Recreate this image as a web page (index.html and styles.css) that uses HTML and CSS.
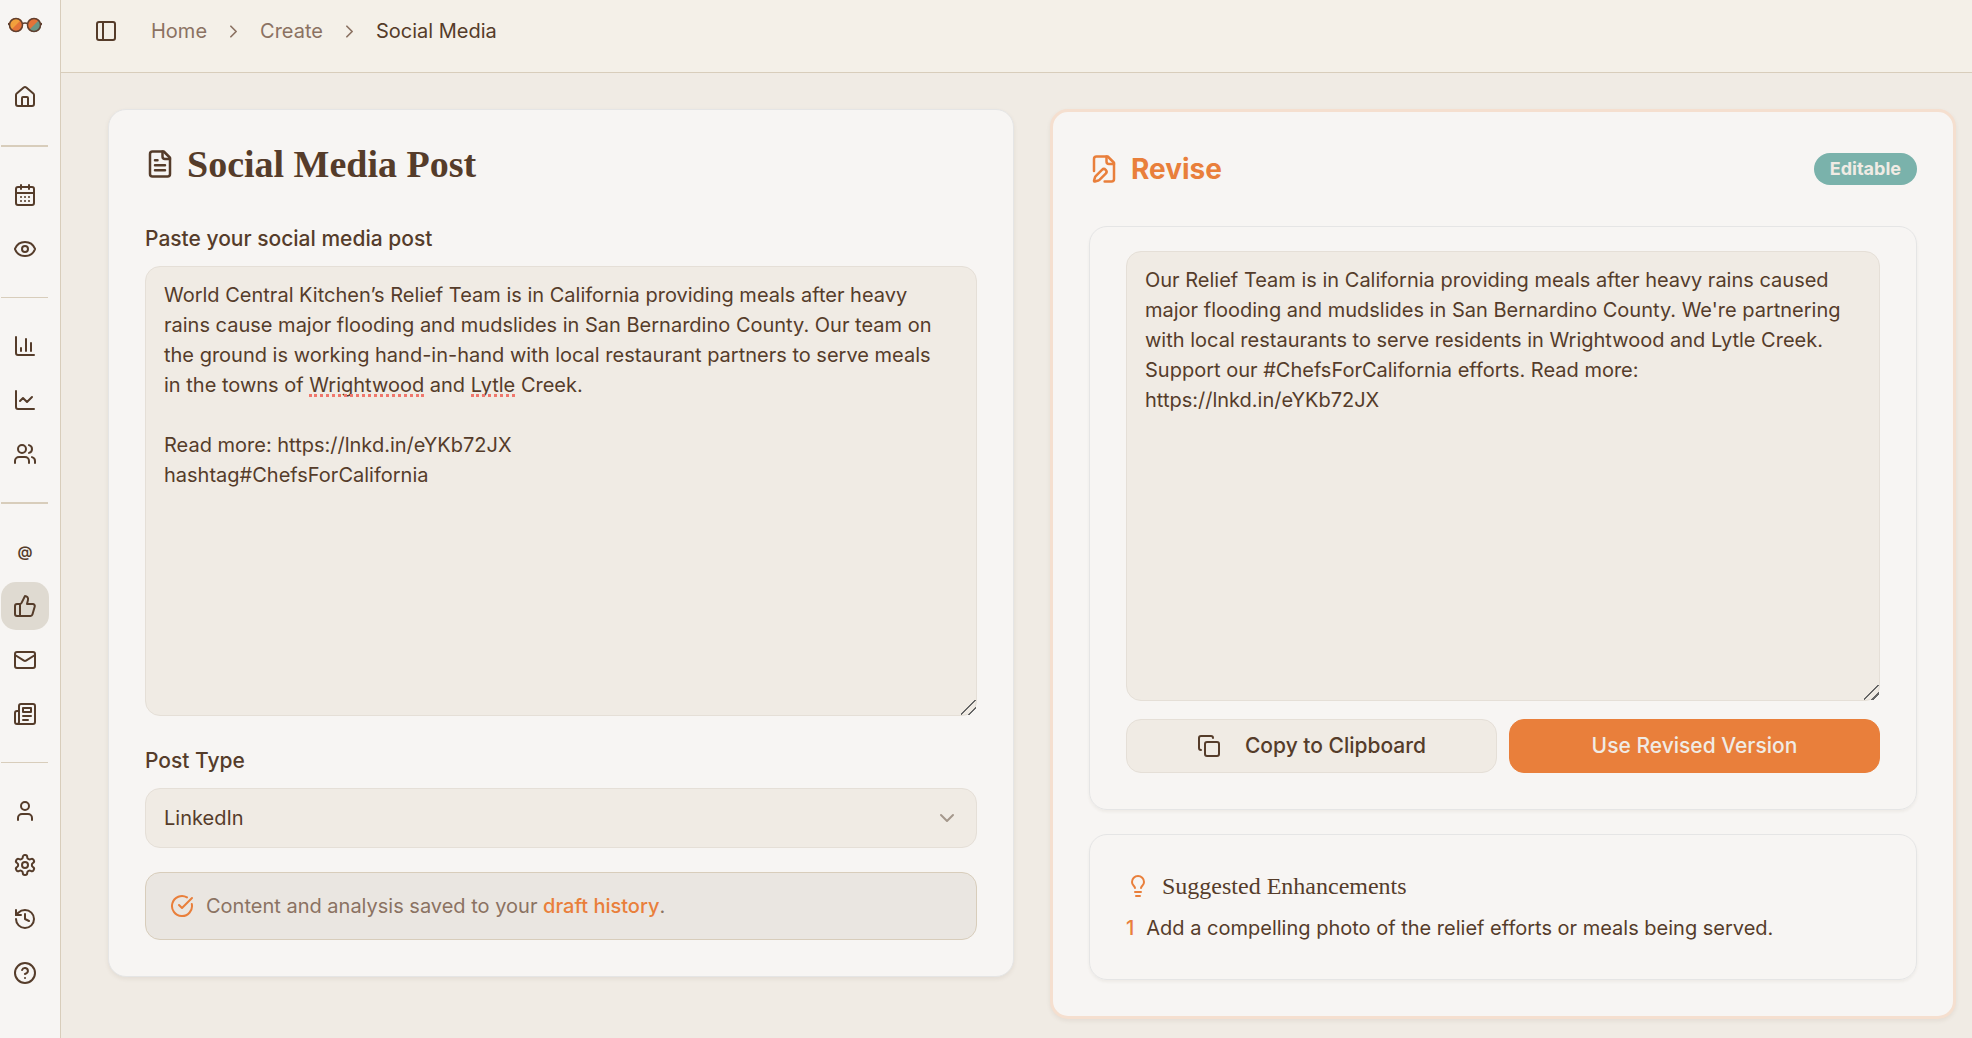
FILE: index.html
```html
<!DOCTYPE html>
<html lang="en">
<head>
  <meta charset="UTF-8">
  <meta name="viewport" content="width=device-width, initial-scale=1">
  <title>Social Media</title>
  <link rel="stylesheet" href="styles.css">
</head>
<body>
  <aside class="sidebar">
    <a class="logo" href="#" aria-label="Dashboard">
      <svg width="34" height="16" viewBox="0 0 34 16">
        <path d="M14 7q3-2 6 0M1 6L0 8M33 6l1 2" fill="none" stroke="#5f3f30" stroke-width="1.5"/>
        <circle cx="8" cy="8" r="7" fill="#e57338"/>
        <path d="M3 13A7 7 0 0 1 13 3Z" fill="#f2a03c"/>
        <circle cx="26" cy="8" r="7" fill="#e57338"/>
        <path d="M21 13A7 7 0 0 0 31 3Z" fill="#6b9685"/>
        <circle cx="8" cy="8" r="6.500" fill="none" stroke="#5f3f30" stroke-width="1.5"/>
        <circle cx="26" cy="8" r="6.500" fill="none" stroke="#5f3f30" stroke-width="1.5"/>
      </svg>
    </a>

    <nav>
      <a href="#" aria-label="Home"><svg class="icon" viewBox="0 0 24 24"><path d="M15 21v-8a1 1 0 0 0-1-1h-4a1 1 0 0 0-1 1v8"/><path d="M3 10a2 2 0 0 1 .709-1.528l7-5.999a2 2 0 0 1 2.582 0l7 5.999A2 2 0 0 1 21 10v9a2 2 0 0 1-2 2H5a2 2 0 0 1-2-2z"/></svg></a>
      <hr>
      <a href="#" aria-label="Calendar"><svg class="icon" viewBox="0 0 24 24"><path d="M8 2v4M16 2v4"/><rect width="18" height="18" x="3" y="4" rx="2"/><path d="M3 10h18M8 14h.01M12 14h.01M16 14h.01M8 18h.01M12 18h.01M16 18h.01"/></svg></a>
      <a href="#" aria-label="Preview"><svg class="icon" viewBox="0 0 24 24"><path d="M2.062 12.348a1 1 0 0 1 0-.696 10.75 10.75 0 0 1 19.876 0 1 1 0 0 1 0 .696 10.75 10.75 0 0 1-19.876 0"/><circle cx="12" cy="12" r="3"/></svg></a>
      <hr>
      <a href="#" aria-label="Reports"><svg class="icon" viewBox="0 0 24 24"><path d="M3 3v16a2 2 0 0 0 2 2h16M18 17V9M13 17V5M8 17v-3"/></svg></a>
      <a href="#" aria-label="Trends"><svg class="icon" viewBox="0 0 24 24"><path d="M3 3v16a2 2 0 0 0 2 2h16"/><path d="m7 13 3-3 4 4 5-5"/></svg></a>
      <a href="#" aria-label="Audience"><svg class="icon" viewBox="0 0 24 24"><path d="M16 21v-2a4 4 0 0 0-4-4H6a4 4 0 0 0-4 4v2"/><circle cx="9" cy="7" r="4"/><path d="M22 21v-2a4 4 0 0 0-3-3.87M16 3.13a4 4 0 0 1 0 7.75"/></svg></a>
      <hr>
      <a class="at" href="#" aria-label="Mentions">@</a>
      <a class="active" href="#" aria-label="Social Media"><svg class="icon" viewBox="0 0 24 24"><path d="M7 10v12"/><path d="M15 5.88 14 10h5.83a2 2 0 0 1 1.92 2.56l-2.33 8A2 2 0 0 1 17.5 22H4a2 2 0 0 1-2-2v-8a2 2 0 0 1 2-2h2.76a2 2 0 0 0 1.79-1.11L12 2a3.13 3.13 0 0 1 3 3.88Z"/></svg></a>
      <a href="#" aria-label="Email"><svg class="icon" viewBox="0 0 24 24"><rect width="20" height="16" x="2" y="4" rx="2"/><path d="m22 7-8.97 5.7a1.94 1.94 0 0 1-2.06 0L2 7"/></svg></a>
      <a href="#" aria-label="Newsletter"><svg class="icon" viewBox="0 0 24 24"><path d="M4 22h16a2 2 0 0 0 2-2V4a2 2 0 0 0-2-2H8a2 2 0 0 0-2 2v16a2 2 0 0 1-2 2Zm0 0a2 2 0 0 1-2-2v-9c0-1.1.9-2 2-2h2M18 14h-8M15 18h-5M10 6h8v4h-8V6Z"/></svg></a>
      <hr>
      <a href="#" aria-label="Profile"><svg class="icon" viewBox="0 0 24 24"><path d="M19 21v-2a4 4 0 0 0-4-4H9a4 4 0 0 0-4 4v2"/><circle cx="12" cy="7" r="4"/></svg></a>
      <a href="#" aria-label="Settings"><svg class="icon" viewBox="0 0 24 24"><path d="M12.22 2h-.44a2 2 0 0 0-2 2v.18a2 2 0 0 1-1 1.73l-.43.25a2 2 0 0 1-2 0l-.15-.08a2 2 0 0 0-2.73.73l-.22.38a2 2 0 0 0 .73 2.73l.15.1a2 2 0 0 1 1 1.72v.51a2 2 0 0 1-1 1.74l-.15.09a2 2 0 0 0-.73 2.73l.22.38a2 2 0 0 0 2.73.73l.15-.08a2 2 0 0 1 2 0l.43.25a2 2 0 0 1 1 1.73V20a2 2 0 0 0 2 2h.44a2 2 0 0 0 2-2v-.18a2 2 0 0 1 1-1.73l.43-.25a2 2 0 0 1 2 0l.15.08a2 2 0 0 0 2.73-.73l.22-.39a2 2 0 0 0-.73-2.73l-.15-.08a2 2 0 0 1-1-1.74v-.5a2 2 0 0 1 1-1.74l.15-.09a2 2 0 0 0 .73-2.73l-.22-.38a2 2 0 0 0-2.73-.73l-.15.08a2 2 0 0 1-2 0l-.43-.25a2 2 0 0 1-1-1.73V4a2 2 0 0 0-2-2z"/><circle cx="12" cy="12" r="3"/></svg></a>
      <a href="#" aria-label="History"><svg class="icon" viewBox="0 0 24 24"><path d="M3 12a9 9 0 1 0 9-9 9.75 9.75 0 0 0-6.74 2.74L3 8"/><path d="M3 3v5h5M12 7v5l4 2"/></svg></a>
      <a href="#" aria-label="Help"><svg class="icon" viewBox="0 0 24 24"><circle cx="12" cy="12" r="10"/><path d="M9.09 9a3 3 0 0 1 5.83 1c0 2-3 3-3 3M12 17h.01"/></svg></a>
    </nav>
  </aside>

  <div class="page">
    <header class="topbar">
      <button class="toggle" aria-label="Toggle sidebar"><svg class="icon" viewBox="0 0 24 24"><rect width="18" height="18" x="3" y="3" rx="2"/><path d="M9 3v18"/></svg></button>
      <nav class="breadcrumb">
        <a href="#">Home</a>
        <svg class="icon chevron" viewBox="0 0 24 24"><path d="m9 18 6-6-6-6"/></svg>
        <a href="#">Create</a>
        <svg class="icon chevron" viewBox="0 0 24 24"><path d="m9 18 6-6-6-6"/></svg>
        <span class="current">Social Media</span>
      </nav>
    </header>

    <main>
      <section class="card">
        <h1><svg class="icon icon-lg" viewBox="0 0 24 24"><path d="M15 2H6a2 2 0 0 0-2 2v16a2 2 0 0 0 2 2h12a2 2 0 0 0 2-2V7Z"/><path d="M14 2v4a2 2 0 0 0 2 2h4M10 9H8M16 13H8M16 17H8"/></svg>Social Media Post</h1>

        <label for="post">Paste your social media post</label>
        <div class="spell-field">
          <textarea id="post" spellcheck="false">World Central Kitchen’s Relief Team is in California providing meals after heavy
rains cause major flooding and mudslides in San Bernardino County. Our team on
the ground is working hand-in-hand with local restaurant partners to serve meals
in the towns of Wrightwood and Lytle Creek.

Read more: https://lnkd.in/eYKb72JX
hashtag#ChefsForCalifornia</textarea>
          <div class="spell-marks" id="post-marks" aria-hidden="true"></div>
        </div>

        <label for="post-type">Post Type</label>
        <div class="select-wrap">
          <select id="post-type">
            <option>LinkedIn</option>
            <option>Facebook</option>
            <option>Instagram</option>
          </select>
          <svg class="icon" viewBox="0 0 24 24"><path d="m6 9 6 6 6-6"/></svg>
        </div>

        <div class="notice">
          <svg class="icon" viewBox="0 0 24 24"><path d="M21.801 10A10 10 0 1 1 17 3.335"/><path d="m9 11 3 3L22 4"/></svg>
          <p>Content and analysis saved to your <a href="#">draft history</a>.</p>
        </div>
      </section>

      <section class="card revise">
        <div class="revise-head">
          <h2><svg class="icon icon-lg" viewBox="0 0 24 24"><path d="M12.5 22H18a2 2 0 0 0 2-2V7l-5-5H6a2 2 0 0 0-2 2v9.5"/><path d="M14 2v4a2 2 0 0 0 2 2h4"/><path d="M13.378 15.626a1 1 0 1 0-3.004-3.004l-5.01 5.012a2 2 0 0 0-.506.854l-.837 2.87a.5.5 0 0 0 .62.62l2.87-.837a2 2 0 0 0 .854-.506z"/></svg>Revise</h2>
          <span class="badge">Editable</span>
        </div>

        <div class="panel">
          <textarea aria-label="Revised post" spellcheck="false">Our Relief Team is in California providing meals after heavy rains caused
major flooding and mudslides in San Bernardino County. We're partnering
with local restaurants to serve residents in Wrightwood and Lytle Creek.
Support our #ChefsForCalifornia efforts. Read more:
https://lnkd.in/eYKb72JX</textarea>
          <div class="actions">
            <button class="btn"><svg class="icon" viewBox="0 0 24 24"><rect width="14" height="14" x="8" y="8" rx="2"/><path d="M4 16c-1.1 0-2-.9-2-2V4c0-1.100.9-2 2-2h10c1.100 0 2 .9 2 2"/></svg>Copy to Clipboard</button>
            <button class="btn primary">Use Revised Version</button>
          </div>
        </div>

        <div class="panel suggestions">
          <h3><svg class="icon" viewBox="0 0 24 24"><path d="M15 14c.2-1 .7-1.700 1.500-2.500 1-.9 1.500-2.200 1.500-3.500A6 6 0 0 0 6 8c0 1 .2 2.200 1.500 3.500.7.7 1.300 1.500 1.500 2.500M9 18h6M10 22h4"/></svg>Suggested Enhancements</h3>
          <ol>
            <li>Add a compelling photo of the relief efforts or meals being served.</li>
          </ol>
        </div>
      </section>
    </main>
  </div>

  <script>
    const unknownWords = /\b(Wrightwood|Lytle)\b/g;
    const post = document.getElementById("post");
    const marks = document.getElementById("post-marks");

    // Lay the text out once to find the unknown words, then keep only their underlines
    function markSpelling() {
      marks.textContent = post.value;
      const node = marks.firstChild;
      const box = marks.getBoundingClientRect();
      const lines = [];

      for (const match of post.value.matchAll(unknownWords)) {
        const range = document.createRange();
        range.setStart(node, match.index);
        range.setEnd(node, match.index + match[0].length);
        const rect = range.getBoundingClientRect();
        const line = document.createElement("span");
        line.style.left = `${rect.left - box.left}px`;
        line.style.top = `${rect.bottom - box.top - post.scrollTop}px`;
        line.style.width = `${rect.width}px`;
        lines.push(line);
      }

      marks.replaceChildren(...lines);
    }

    post.addEventListener("input", markSpelling);
    post.addEventListener("scroll", markSpelling);
    window.addEventListener("resize", markSpelling);
    markSpelling();
  </script>
</body>
</html>
```

FILE: styles.css
```css
* { box-sizing: border-box; margin: 0; padding: 0; }

body {
  display: flex;
  min-height: 100vh;
  background: #f0ebe4;
  color: #553c2a;
  font: 20px/30px Inter, "Liberation Sans", sans-serif;
}

a { color: inherit; text-decoration: none; }
button, textarea, select { font: inherit; color: inherit; }
button { cursor: pointer; }

.icon {
  width: 24px;
  height: 24px;
  flex: none;
  fill: none;
  stroke: currentColor;
  stroke-width: 2;
  stroke-linecap: round;
  stroke-linejoin: round;
}
.icon-lg { width: 30px; height: 30px; }

/* Sidebar */
.sidebar {
  width: 61px;
  flex: none;
  background: #f7f5f3;
  border-right: 1px solid #d8cdbb;
}
.logo { display: flex; height: 73px; padding: 17px 8px; }
.sidebar nav { display: flex; flex-direction: column; gap: 6px; padding-left: 1px; }
.sidebar nav a {
  display: flex;
  align-items: center;
  justify-content: center;
  width: 48px;
  height: 48px;
  border-radius: 15px;
}
.sidebar nav a.active { background: #dfdad1; }
.sidebar .at { font-size: 15px; font-weight: 600; }
.sidebar hr { width: 47px; margin: 18px 0; border: 0; border-top: 1px solid #d8cdbb; }
.sidebar hr:nth-of-type(odd) { border-top-width: 2px; }

/* Top bar */
.page { flex: 1; min-width: 0; }
.topbar {
  display: flex;
  align-items: center;
  gap: 33px;
  height: 73px;
  padding: 0 33px 10px;
  background: #f4f0e8;
  border-bottom: 1px solid #d8cdbb;
}
.toggle { display: flex; border: 0; background: none; }
.breadcrumb { display: flex; align-items: center; gap: 16px; color: #8b7262; }
.breadcrumb .current { color: #553c2a; }
.chevron { width: 21px; height: 21px; }

main {
  display: grid;
  grid-template-columns: 1fr 1fr;
  align-items: start;
  gap: 36px;
  padding: 36px 16px 18px 47px;
}

.card {
  padding: 36px;
  background: #f7f5f3;
  border: 1px solid #e5e5e5;
  border-radius: 18px;
  box-shadow: 0 2px 4px rgba(85, 60, 42, 0.08);
}
.card.revise { border: 3px solid #f5dfcf; }

h1, h2, h3 { display: flex; align-items: center; gap: 12px; }
h1 { margin-bottom: 42px; font: bold 38px/36px "Liberation Serif", serif; }
h2 { color: #e97f3b; font-size: 28px; font-weight: 700; line-height: 36px; }
h3 { font: 24px/30px "Liberation Serif", serif; }
h3 .icon { color: #e97f3b; }

label { display: block; margin-bottom: 12px; font-size: 21px; font-weight: 500; }

textarea {
  display: block;
  width: 100%;
  height: 450px;
  padding: 13px 18px;
  background: #f0ebe4;
  border: 1px solid #e5dfd7;
  border-radius: 15px;
  outline: 0;
  resize: vertical;
}
textarea::-webkit-resizer {
  background: linear-gradient(135deg,
    transparent 46%, #666 46%, #666 53%, transparent 53%,
    transparent 73%, #666 73%, #666 80%, transparent 80%);
}

.spell-field { position: relative; margin-bottom: 30px; }
.spell-marks {
  position: absolute;
  inset: 0;
  padding: 14px 19px;
  overflow: hidden;
  white-space: pre-wrap;
  pointer-events: none;
}
.spell-marks span {
  position: absolute;
  margin-top: -3px;
  border-bottom: 3px dotted #f0776c;
}

.select-wrap { position: relative; margin-bottom: 24px; }
.select-wrap select {
  width: 100%;
  height: 60px;
  padding: 0 18px;
  background: #f0ebe4;
  border: 1px solid #e5dfd7;
  border-radius: 15px;
  appearance: none;
}
.select-wrap .icon { position: absolute; right: 18px; top: 18px; color: #a5988c; pointer-events: none; }

.notice {
  display: flex;
  align-items: center;
  gap: 12px;
  height: 68px;
  padding: 0 24px;
  background: #eae6e1;
  border: 1px solid #d8cdbb;
  border-radius: 15px;
  color: #8b7262;
}
.notice .icon, .notice a { color: #e97f3b; }
.notice a { font-weight: 500; }

/* Revise card */
.revise-head { display: flex; align-items: center; justify-content: space-between; height: 42px; margin-bottom: 36px; }
.badge {
  padding: 1px 16px;
  border-radius: 16px;
  background: #7ab2ab;
  color: #f0ebe4;
  font-size: 18px;
  font-weight: 700;
}
.panel {
  padding: 24px 36px 36px;
  border: 1px solid #e5e5e5;
  border-radius: 18px;
  box-shadow: 0 2px 3px rgba(85, 60, 42, 0.06);
}
.actions { display: grid; grid-template-columns: 1fr 1fr; gap: 12px; margin-top: 18px; }
.btn {
  display: flex;
  align-items: center;
  justify-content: center;
  gap: 24px;
  height: 54px;
  background: #f0ebe4;
  border: 1px solid #e5dfd7;
  border-radius: 15px;
  font-size: 21px;
  font-weight: 500;
}
.btn.primary { background: #e97f3b; border-color: #e97f3b; color: #f0ebe4; }

.suggestions { margin-top: 24px; padding-top: 36px; }
.suggestions ol { margin-top: 12px; list-style: none; counter-reset: tip; }
.suggestions li { display: flex; gap: 12px; counter-increment: tip; }
.suggestions li::before { content: counter(tip); color: #e97f3b; font-weight: 500; }
```
